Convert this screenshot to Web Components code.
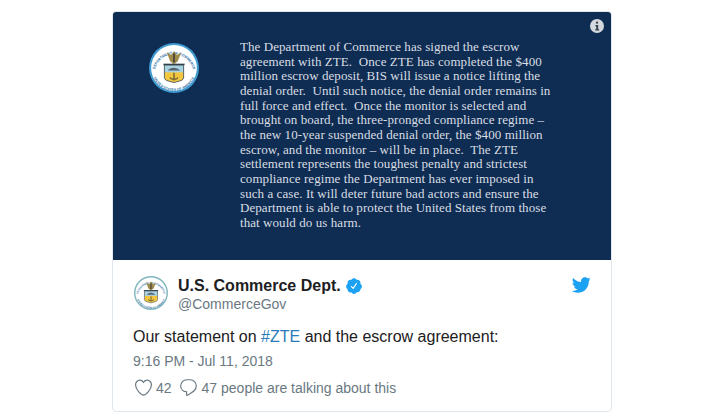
<!DOCTYPE html>
<html>
<head>
<meta charset="utf-8">
<style>
  body { margin: 0; padding: 11px 0 0 112px; background: #fff; font-family: "Liberation Sans", Arial, sans-serif; }
  tweet-card a { color: #2b7bb9; text-decoration: none; }
</style>
</head>
<body>
<tweet-card>
  <media-statement slot="media">The Department of Commerce has signed the escrow
agreement with ZTE.  Once ZTE has completed the $400
million escrow deposit, BIS will issue a notice lifting the
denial order.  Until such notice, the denial order remains in
full force and effect.  Once the monitor is selected and
brought on board, the three-pronged compliance regime –
the new 10-year suspended denial order, the $400 million
escrow, and the monitor – will be in place.  The ZTE
settlement represents the toughest penalty and strictest
compliance regime the Department has ever imposed in
such a case. It will deter future bad actors and ensure the
Department is able to protect the United States from those
that would do us harm.</media-statement>
  <tweet-author slot="author" name="U.S. Commerce Dept." handle="@CommerceGov"></tweet-author>
  <span slot="text">Our statement on <a href="#">#ZTE</a> and the escrow agreement:</span>
  <span slot="time">9:16 PM - Jul 11, 2018</span>
  <tweet-actions slot="actions" likes="42" talking="47 people are talking about this"></tweet-actions>
</tweet-card>

<script>
class SealMark extends HTMLElement {
  constructor() {
    super();
    this.attachShadow({ mode: "open" });
    const size = this.getAttribute("size") || 52;
    const ring = this.getAttribute("ring") || "#3f9ad0";
    this.shadowRoot.innerHTML = `
      <style>
        :host { display: block; width: ${size}px; height: ${size}px; flex: none; }
        svg { display: block; width: 100%; height: 100%; }
        text { font: bold 3.7px "Liberation Sans", sans-serif; fill: #2c6ea6; }
      </style>
      <svg viewBox="0 0 52 52">
        <defs>
          <path id="top" d="M6 29a20.2 20.2 0 0 1 40 0"></path>
          <path id="bot" d="M3 27a23 23 0 0 0 46 0"></path>
        </defs>
        <circle cx="26" cy="26" r="26" fill="${ring}"></circle>
        <circle cx="26" cy="26" r="23.8" fill="#fff"></circle>
        <text><textPath href="#top" startOffset="50%" text-anchor="middle">DEPARTMENT OF COMMERCE</textPath></text>
        <text><textPath href="#bot" startOffset="50%" text-anchor="middle">UNITED STATES OF AMERICA</textPath></text>
        <path d="M26 22 L22 19 L18.5 9.5 L23 12.5 L25 10 L26 8.5 L27 10 L29 12.5 L33.5 9.5 L30 19Z" fill="#a08a4c"></path>
        <path d="M26 11v9" stroke="#4d4a3a" stroke-width="2"></path>
        <path d="M15 21.5h22v1.6H15z" fill="#33404f"></path>
        <path d="M16 23h20v13.5q-1 2.6-4 3l-6 1.6-6-1.6q-3-.4-4-3z" fill="#f3c63f"></path>
        <path d="M16 23h20v7.5H16z" fill="#a7d3e4"></path>
        <path d="M19.5 28.5c3-3.6 9-3.6 13 0z" fill="#59636b"></path>
        <path d="M25.2 31h1.6v8h-1.6zM21.5 35q4.5 4 9 0l-.5 2.4q-4 2.4-8 0z" fill="#7a6a3a"></path>
        <path d="M16 23h20v13.5q-1 2.6-4 3l-6 1.6-6-1.6q-3-.4-4-3z" fill="none" stroke="#33404f" stroke-width=".8"></path>
      </svg>`;
  }
}
customElements.define("seal-mark", SealMark);

class MediaStatement extends HTMLElement {
  constructor() {
    super();
    this.attachShadow({ mode: "open" });
    this.shadowRoot.innerHTML = `
      <style>
        :host { display: block; position: relative; height: 248px; background: #0f2d52; color: #d9dde4; border-radius: 3px 3px 0 0; }
        .wrap { display: flex; align-items: flex-start; padding: 28px 0 0 36px; }
        seal-mark { margin-top: 3px; }
        .copy {
          margin-left: 41px;
          font: 13px/14.66px "Liberation Serif", "Times New Roman", serif;
          letter-spacing: .07px; white-space: pre;
        }
        .info { position: absolute; top: 7px; right: 7px; width: 14px; height: 14px; }
      </style>
      <div class="wrap">
        <seal-mark size="50"></seal-mark>
        <div class="copy"><slot></slot></div>
      </div>
      <svg class="info" viewBox="0 0 14 14">
        <circle cx="7" cy="7" r="7" fill="#d5d8dc"></circle>
        <rect x="5.9" y="2.6" width="2.2" height="2.2" rx="1" fill="#33414f"></rect>
        <path d="M5.4 6h2.8v4.2h1v1.2H5.2v-1.2h1V7.2h-.8z" fill="#33414f"></path>
      </svg>`;
  }
}
customElements.define("media-statement", MediaStatement);

class TweetAuthor extends HTMLElement {
  constructor() {
    super();
    this.attachShadow({ mode: "open" });
    this.shadowRoot.innerHTML = `
      <style>
        :host { display: flex; align-items: flex-start; gap: 10px; padding-left: 1px; }
        .names { display: flex; flex-direction: column; }
        .name { display: flex; align-items: center; gap: 4px; font: bold 16px/20px "Liberation Sans", Arial, sans-serif; color: #1c2022; }
        .name svg { width: 18px; height: 18px; fill: #1da1f2; }
        .handle { font: 14px/17px "Liberation Sans", Arial, sans-serif; color: #697882; }
      </style>
      <seal-mark size="34" ring="#7fb6bd"></seal-mark>
      <div class="names">
        <div class="name">${this.getAttribute("name")}
          <svg viewBox="0 0 24 24"><path d="M22.5 12.5c0-1.58-.875-2.95-2.148-3.6.154-.435.238-.905.238-1.4 0-2.21-1.71-3.998-3.818-3.998-.47 0-.92.084-1.336.25C14.818 2.415 13.51 1.5 12 1.5s-2.816.917-3.437 2.25c-.415-.165-.866-.25-1.336-.25-2.11 0-3.818 1.79-3.818 4 0 .494.083.964.237 1.4-1.272.65-2.147 2.018-2.147 3.6 0 1.495.782 2.798 1.942 3.486-.02.17-.032.34-.032.514 0 2.21 1.708 4 3.818 4 .47 0 .92-.086 1.335-.25.62 1.334 1.926 2.25 3.437 2.25 1.512 0 2.818-.916 3.437-2.25.415.163.865.248 1.336.248 2.11 0 3.818-1.79 3.818-4 0-.174-.012-.344-.033-.513 1.158-.687 1.943-1.99 1.943-3.484zm-6.616-3.334l-4.334 6.5c-.145.217-.382.334-.625.334-.143 0-.288-.04-.416-.126l-.115-.094-2.415-2.415c-.293-.293-.293-.768 0-1.06s.768-.294 1.06 0l1.77 1.767 3.825-5.74c.23-.345.696-.436 1.04-.207.346.23.44.696.21 1.04z"></path></svg>
        </div>
        <div class="handle">${this.getAttribute("handle")}</div>
      </div>`;
  }
}
customElements.define("tweet-author", TweetAuthor);

class TweetActions extends HTMLElement {
  constructor() {
    super();
    this.attachShadow({ mode: "open" });
    this.shadowRoot.innerHTML = `
      <style>
        :host { display: flex; align-items: center; padding-left: 1px; font: 14px/18px "Liberation Sans", Arial, sans-serif; color: #697882; }
        svg { width: 19px; height: 19px; fill: none; stroke: #697882; stroke-width: 1.5; flex: none; }
        .likes { margin: 0 7px 0 3px; }
        .talk { margin-left: 4px; }
      </style>
      <svg viewBox="0 0 24 24"><path d="M12 21.6C9.4 21.6 1.95 14.9 1.95 8.5c0-3.1 2.5-5.8 5.4-5.8 2.3 0 3.8 1.6 4.65 2.75.8-1.15 2.35-2.75 4.65-2.75 2.9 0 5.4 2.7 5.4 5.8 0 6.4-7.45 13.1-10.05 13.1z"></path></svg>
      <span class="likes">${this.getAttribute("likes")}</span>
      <svg viewBox="0 0 24 24"><path d="M14.05 2.24l-4.15-.01c-4.37 0-7.8 3.43-7.8 7.8 0 4.1 3.19 7.21 7.47 7.37v3.83c0 .3.5.95 1.15.63.26-.17 6.47-4.14 8.09-5.5 1.9-1.61 3.04-3.97 3.04-6.31v-.02c-.01-4.37-3.43-7.79-7.8-7.79z"></path></svg>
      <span class="talk">${this.getAttribute("talking")}</span>`;
  }
}
customElements.define("tweet-actions", TweetActions);

class TweetCard extends HTMLElement {
  constructor() {
    super();
    this.attachShadow({ mode: "open" });
    const template = document.createElement("template");
    template.innerHTML = `
      <style>
        :host { display: block; width: 500px; box-sizing: border-box; border: 1px solid #e1e8ed; border-radius: 4px; background: #fff; }
        .body { padding: 16px 20px 14px 20px; }
        .head { display: flex; justify-content: space-between; align-items: flex-start; }
        .bird { width: 20px; height: 20px; fill: #1da1f2; margin-top: -1px; }
        .text { margin-top: 13px; font: 16px/22px "Liberation Sans", Arial, sans-serif; color: #1c2022; }
        .time { margin-top: 4px; font: 14px/18px "Liberation Sans", Arial, sans-serif; color: #697882; }
        .acts { margin-top: 8px; }
      </style>
      <slot name="media"></slot>
      <div class="body">
        <div class="head">
          <slot name="author"></slot>
          <svg class="bird" viewBox="0 0 24 24"><path d="M23.643 4.937c-.835.37-1.732.62-2.675.733.962-.576 1.7-1.49 2.048-2.578-.9.534-1.897.922-2.958 1.13-.85-.904-2.06-1.47-3.4-1.47-2.572 0-4.658 2.086-4.658 4.66 0 .364.042.718.12 1.06-3.873-.195-7.304-2.05-9.602-4.868-.4.69-.63 1.49-.63 2.342 0 1.616.823 3.043 2.072 3.878-.764-.025-1.482-.234-2.11-.583v.06c0 2.257 1.605 4.14 3.737 4.568-.392.106-.803.162-1.227.162-.3 0-.593-.028-.877-.082.593 1.85 2.313 3.198 4.352 3.234-1.595 1.25-3.604 1.995-5.786 1.995-.376 0-.747-.022-1.112-.065 2.062 1.323 4.51 2.093 7.14 2.093 8.57 0 13.255-7.098 13.255-13.254 0-.2-.005-.402-.014-.602.91-.658 1.7-1.477 2.323-2.41z"></path></svg>
        </div>
        <div class="text"><slot name="text"></slot></div>
        <div class="time"><slot name="time"></slot></div>
        <div class="acts"><slot name="actions"></slot></div>
      </div>`;
    this.shadowRoot.appendChild(template.content.cloneNode(true));
  }
}
customElements.define("tweet-card", TweetCard);
</script>
</body>
</html>
